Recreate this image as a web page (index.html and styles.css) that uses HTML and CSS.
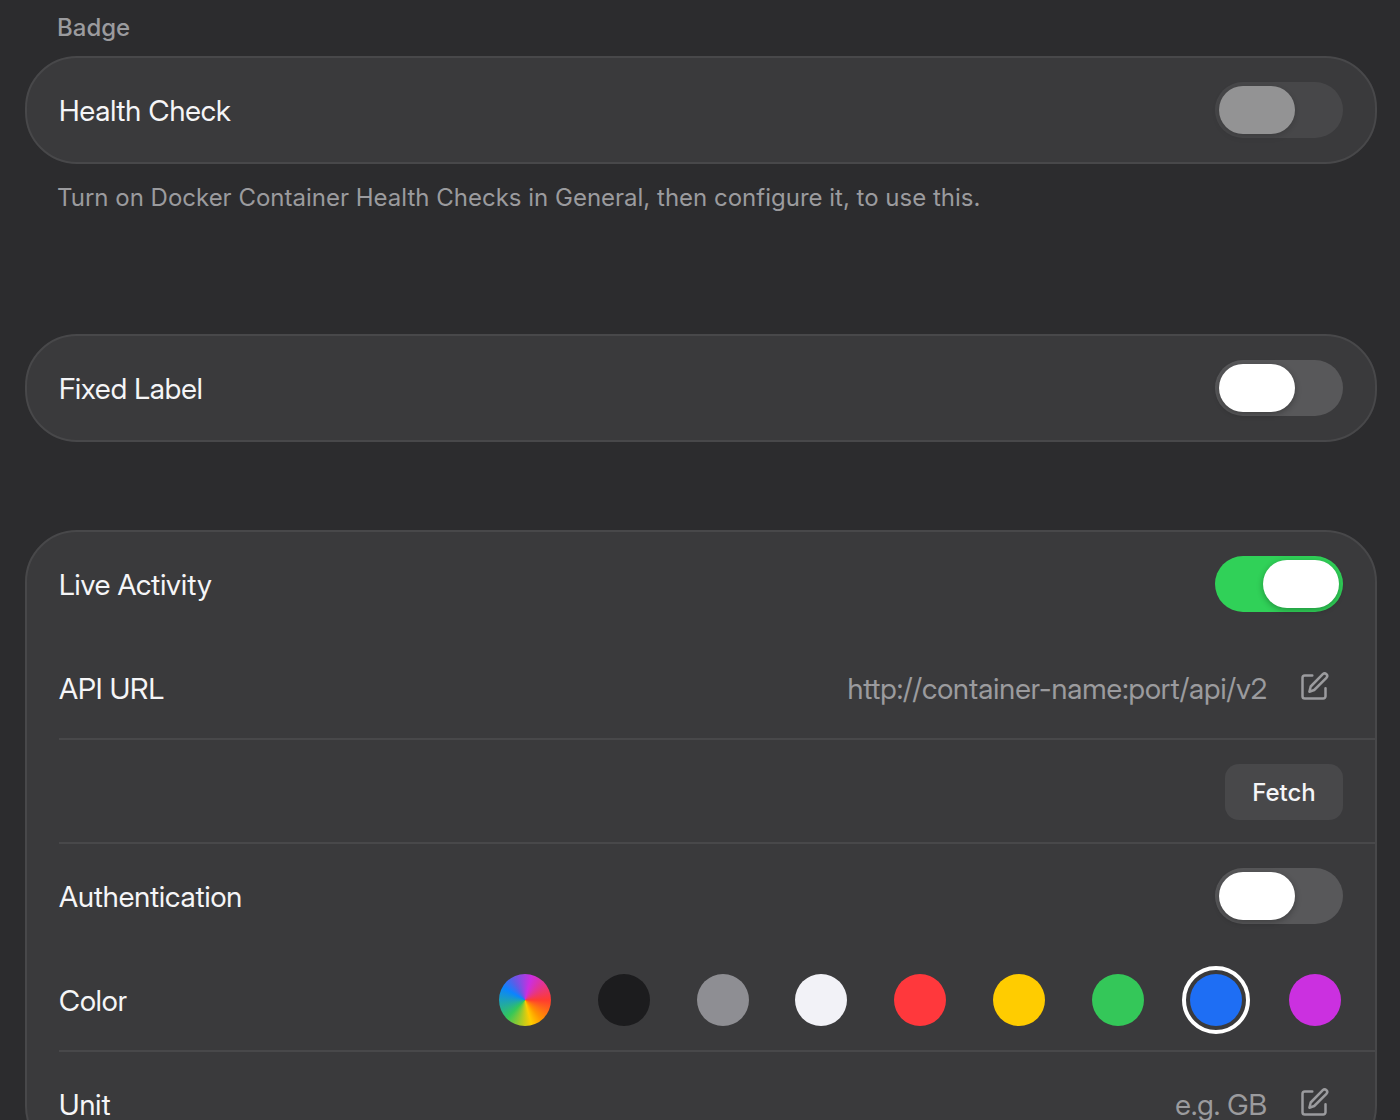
FILE: index.html
```html
<!DOCTYPE html>
<html lang="en">
<head>
<meta charset="utf-8">
<meta name="viewport" content="width=device-width, initial-scale=1">
<title>Settings</title>
<link rel="stylesheet" href="styles.css">
</head>
<body>
<main class="settings">
  <section class="group">
    <h2 class="group-title">Badge</h2>
    <div class="card">
      <div class="row">
        <label class="row-label" for="health">Health Check</label>
        <input class="switch" type="checkbox" id="health" disabled>
      </div>
    </div>
    <p class="group-note">Turn on Docker Container Health Checks in General, then configure it, to use this.</p>
  </section>

  <section class="card">
    <div class="row">
      <label class="row-label" for="fixed">Fixed Label</label>
      <input class="switch" type="checkbox" id="fixed">
    </div>
  </section>

  <section class="card card-activity">
    <div class="row">
      <label class="row-label" for="live">Live Activity</label>
      <input class="switch" type="checkbox" id="live" checked>
    </div>
    <div class="row row-divided">
      <label class="row-label" for="url">API URL</label>
      <input class="field" type="text" id="url" placeholder="http://container-name:port/api/v2">
      <button class="edit" type="button" aria-label="Edit API URL">
        <svg class="edit-icon" viewBox="0 0 32 32" aria-hidden="true"><path d="M13.3 5.5H5.8a2.3 2.3 0 0 0-2.3 2.3v18.4a2.3 2.3 0 0 0 2.3 2.3h18.4a2.3 2.3 0 0 0 2.3-2.3v-7.9"/><path d="M23.8 4.2a2.5 2.5 0 0 1 3.6 3.6L15.2 20l-4.8 1.7 1.3-5.2z"/></svg>
      </button>
    </div>
    <div class="row row-divided row-end">
      <button class="fetch" type="button">Fetch</button>
    </div>
    <div class="row">
      <label class="row-label" for="auth">Authentication</label>
      <input class="switch" type="checkbox" id="auth">
    </div>
    <div class="row row-divided" role="radiogroup" aria-labelledby="color-label">
      <span class="row-label" id="color-label">Color</span>
      <div class="swatches">
        <input class="swatch swatch-custom" type="radio" name="color" aria-label="Custom">
        <input class="swatch swatch-black" type="radio" name="color" aria-label="Black">
        <input class="swatch swatch-gray" type="radio" name="color" aria-label="Gray">
        <input class="swatch swatch-white" type="radio" name="color" aria-label="White">
        <input class="swatch swatch-red" type="radio" name="color" aria-label="Red">
        <input class="swatch swatch-yellow" type="radio" name="color" aria-label="Yellow">
        <input class="swatch swatch-green" type="radio" name="color" aria-label="Green">
        <input class="swatch swatch-blue" type="radio" name="color" aria-label="Blue" checked>
        <input class="swatch swatch-purple" type="radio" name="color" aria-label="Purple">
      </div>
    </div>
    <div class="row">
      <label class="row-label" for="unit">Unit</label>
      <input class="field" type="text" id="unit" placeholder="e.g. GB">
      <button class="edit" type="button" aria-label="Edit unit">
        <svg class="edit-icon" viewBox="0 0 32 32" aria-hidden="true"><path d="M13.3 5.5H5.8a2.3 2.3 0 0 0-2.3 2.3v18.4a2.3 2.3 0 0 0 2.3 2.3h18.4a2.3 2.3 0 0 0 2.3-2.3v-7.9"/><path d="M23.8 4.2a2.5 2.5 0 0 1 3.6 3.6L15.2 20l-4.8 1.7 1.3-5.2z"/></svg>
      </button>
    </div>
  </section>
</main>
</body>
</html>
```

FILE: styles.css
```css
* {
  box-sizing: border-box;
}

body {
  margin: 0;
  background: #2c2c2e;
  color: #f5f5f7;
  font-family: "Inter Display", Inter, "Liberation Sans", sans-serif;
  font-size: 29px;
}

.settings {
  height: 100vh;
  overflow-y: auto;
  scrollbar-width: none;
  padding: 12px 23px 0 25px;
}

.group {
  margin-bottom: 120px;
}

.group-title,
.group-note {
  margin: 0;
  padding: 0 32px;
  color: #9b9b9e;
  font-family: Inter, "Liberation Sans", sans-serif;
  font-size: 24px;
  line-height: 32px;
}

.group-title {
  margin-bottom: 12px;
  font-weight: 500;
}

.group-note {
  margin-top: 18px;
  font-weight: 400;
}

.card {
  border: 2px solid #48484a;
  border-radius: 52px;
  background: #3a3a3c;
}

.card-activity {
  margin-top: 88px;
}

.row {
  display: flex;
  align-items: center;
  height: 104px;
  margin-left: 32px;
  padding-right: 32px;
}

.row-divided {
  box-shadow: inset 0 -2px #48484a;
}

.row-end {
  justify-content: flex-end;
}

.row-label {
  flex: none;
  margin-right: auto;
}

.switch {
  appearance: none;
  display: flex;
  flex: none;
  width: 128px;
  height: 56px;
  margin: 0;
  padding: 4px;
  border-radius: 28px;
  background: #58585a;
}

.switch::before {
  content: "";
  width: 76px;
  height: 48px;
  border-radius: 24px;
  background: #fff;
  box-shadow: 0 2px 6px rgba(0, 0, 0, 0.3);
}

.switch:checked {
  justify-content: flex-end;
  background: #30d158;
}

.switch:disabled {
  opacity: 0.45;
}

.field {
  flex: 1;
  min-width: 0;
  padding: 0;
  border: 0;
  outline: 0;
  background: none;
  color: inherit;
  font: inherit;
  text-align: right;
}

.field::placeholder {
  color: #9b9b9e;
  opacity: 1;
}

.edit {
  display: flex;
  flex: none;
  margin: 0 12px 0 32px;
  padding: 0;
  border: 0;
  background: none;
  color: #9b9b9e;
}

.edit-icon {
  width: 32px;
  height: 32px;
  margin-bottom: 4px;
  fill: none;
  stroke: currentColor;
  stroke-width: 2.5;
  stroke-linecap: round;
  stroke-linejoin: round;
}

.fetch {
  width: 118px;
  height: 56px;
  padding: 0;
  border: 0;
  border-radius: 14px;
  background: #48484a;
  color: inherit;
  font: inherit;
  font-family: Inter, "Liberation Sans", sans-serif;
  font-size: 24px;
  font-weight: 500;
}

.swatches {
  display: flex;
  flex: 0 1 842px;
  justify-content: space-between;
  margin-right: 2px;
}

.swatch {
  appearance: none;
  width: 52px;
  height: 52px;
  margin: 0;
  border-radius: 50%;
}

.swatch:checked {
  outline: 4px solid #fff;
  outline-offset: 4px;
}

.swatch-custom {
  background: conic-gradient(from 90deg, #ff3b30, #ff9500 50deg, #ffcc00 75deg, #34c759 135deg, #0a84ff 210deg, #5e5ce6 240deg, #cc2ee0 285deg, #ff3b30);
}

.swatch-black { background: #1c1c1e; }
.swatch-gray { background: #8e8e93; }
.swatch-white { background: #f2f2f7; }
.swatch-red { background: #ff383c; }
.swatch-yellow { background: #ffcc00; }
.swatch-green { background: #34c759; }
.swatch-blue { background: #1e6ef4; }
.swatch-purple { background: #cb30e0; }
```
